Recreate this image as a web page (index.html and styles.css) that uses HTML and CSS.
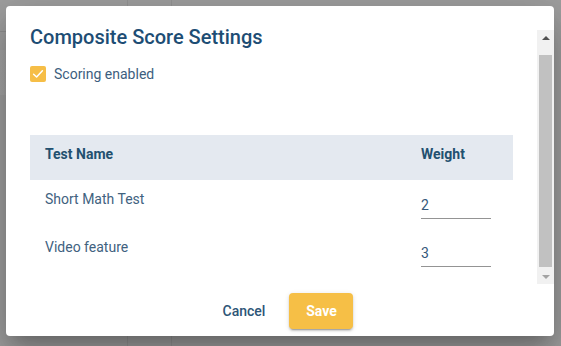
FILE: index.html
```html
<!DOCTYPE html>
<html lang="en">
<head>
<meta charset="utf-8">
<title>Composite Score Settings</title>
<link rel="stylesheet" href="styles.css">
</head>
<body>
<div class="dialog" role="dialog" aria-labelledby="dlg-title">
  <div class="dialog-main">
    <div class="content">
      <h2 class="title" id="dlg-title">Composite Score Settings</h2>
      <label class="check-row">
        <span class="checkbox">
          <svg width="16" height="16" viewBox="0 0 16 16" aria-hidden="true"><path d="M3.6 8.2 L6.6 11 L12.4 4.8" fill="none" stroke="#fff" stroke-width="1.5" stroke-linecap="round" stroke-linejoin="round"/></svg>
        </span>
        <span class="check-label">Scoring enabled</span>
      </label>
      <div class="table">
        <div class="thead">
          <div class="th th-name">Test Name</div>
          <div class="th">Weight</div>
        </div>
        <div class="tr">
          <div class="td td-name">Short Math Test</div>
          <div class="td"><input class="weight" type="text" value="2"></div>
        </div>
        <div class="tr">
          <div class="td td-name">Video feature</div>
          <div class="td"><input class="weight" type="text" value="3"></div>
        </div>
      </div>
    </div>
    <div class="scrollbar" aria-hidden="true">
      <div class="sb-btn"><span class="tri-up"></span></div>
      <div class="sb-track"><div class="sb-thumb"></div></div>
      <div class="sb-btn"><span class="tri-down"></span></div>
    </div>
  </div>
  <div class="actions">
    <button class="btn btn-text" type="button">Cancel</button>
    <button class="btn btn-save" type="button">Save</button>
  </div>
</div>
</body>
</html>
```
FILE: styles.css
```css
html, body {
  margin: 0;
  height: 100%;
}
body {
  width: 561px;
  height: 346px;
  overflow: hidden;
  box-sizing: border-box;
  padding: 6px 7px 10px 6px;
  font-family: Roboto, "Noto Sans", "Liberation Sans", sans-serif;
  background-color: #9f9f9f;
  background-image:
    linear-gradient(to right, transparent 127px, rgba(0,0,0,0.07) 127px, rgba(0,0,0,0.07) 128px, transparent 128px),
    linear-gradient(to right, transparent 171px, rgba(0,0,0,0.07) 171px, rgba(0,0,0,0.07) 172px, transparent 172px),
    linear-gradient(to bottom, transparent 31px, rgba(0,0,0,0.1) 31px, rgba(0,0,0,0.1) 32px, transparent 32px, transparent 50px, rgba(255,255,255,0.06) 50px, rgba(255,255,255,0.06) 95px, transparent 95px);
  background-size: 100% 100%, 100% 100%, 6px 100%;
  background-repeat: no-repeat;
}

.dialog {
  width: 548px;
  height: 330px;
  background: #fff;
  border-radius: 4px;
  display: flex;
  flex-direction: column;
  box-shadow: 0 11px 15px -7px rgba(0,0,0,0.2), 0 24px 38px 3px rgba(0,0,0,0.14), 0 9px 46px 8px rgba(0,0,0,0.12);
}

.dialog-main {
  flex: 1;
  display: flex;
  min-height: 0;
}

.content {
  flex: 1;
  padding: 15px 24px 0 24px;
  min-width: 0;
}

.title {
  margin: 0;
  font-size: 20px;
  font-weight: 500;
  line-height: 32px;
  color: #1d4d74;
}

.check-row {
  display: flex;
  align-items: center;
  gap: 8px;
  margin-top: 13px;
  height: 16px;
}

.checkbox {
  width: 16px;
  height: 16px;
  border-radius: 2px;
  background: #f6be47;
  display: flex;
}

.check-label {
  font-size: 14px;
  line-height: 20px;
  color: #3d5e7e;
}

.table {
  margin-top: 53px;
}

.thead {
  display: grid;
  grid-template-columns: 1fr 92px;
  height: 45px;
  box-sizing: border-box;
  padding-top: 9px;
  background: #e4e9f0;
}

.th {
  font-size: 14px;
  line-height: 20px;
  font-weight: 700;
  color: #22506f;
}

.th-name,
.td-name {
  padding-left: 15px;
}

.tr {
  display: grid;
  grid-template-columns: 1fr 92px;
  height: 48px;
}

.td {
  font-size: 14px;
  line-height: 20px;
  color: #41627f;
}

.td-name {
  padding-top: 9px;
}

.weight {
  display: block;
  margin-top: 15px;
  width: 70px;
  height: 20px;
  box-sizing: content-box;
  padding: 0 0 3px 0;
  border: none;
  border-bottom: 1px solid #949494;
  font-family: inherit;
  font-size: 14px;
  line-height: 20px;
  color: #35587a;
  background: transparent;
  outline: none;
}

.scrollbar {
  width: 17px;
  margin-top: 24px;
  background: #f1f1f1;
  display: flex;
  flex-direction: column;
}

.sb-btn {
  height: 15px;
  display: flex;
  align-items: center;
  justify-content: center;
}

.tri-up {
  width: 0;
  height: 0;
  border-left: 4px solid transparent;
  border-right: 4px solid transparent;
  border-bottom: 4px solid #505050;
}

.tri-down {
  width: 0;
  height: 0;
  border-left: 4px solid transparent;
  border-right: 4px solid transparent;
  border-top: 4px solid #a3a3a3;
}

.sb-track {
  flex: 1;
  padding: 10px 2px 0 2px;
}

.sb-thumb {
  height: 212px;
  background: #c1c1c1;
}

.actions {
  height: 52px;
  box-sizing: border-box;
  padding: 9px 0 7px;
  display: flex;
  justify-content: center;
  align-items: flex-start;
  gap: 8px;
}

.btn {
  font-family: inherit;
  font-size: 14px;
  line-height: 20px;
  height: 36px;
  min-width: 64px;
  padding: 0 16px;
  border: none;
  border-radius: 4px;
  cursor: pointer;
}

.btn-text {
  background: transparent;
  color: #2d5577;
  font-weight: 500;
}

.btn-save {
  background: #f6bf46;
  color: #fff;
  font-weight: 700;
  box-shadow: 0 3px 1px -2px rgba(0,0,0,0.2), 0 2px 2px 0 rgba(0,0,0,0.14), 0 1px 5px 0 rgba(0,0,0,0.12);
}
```
